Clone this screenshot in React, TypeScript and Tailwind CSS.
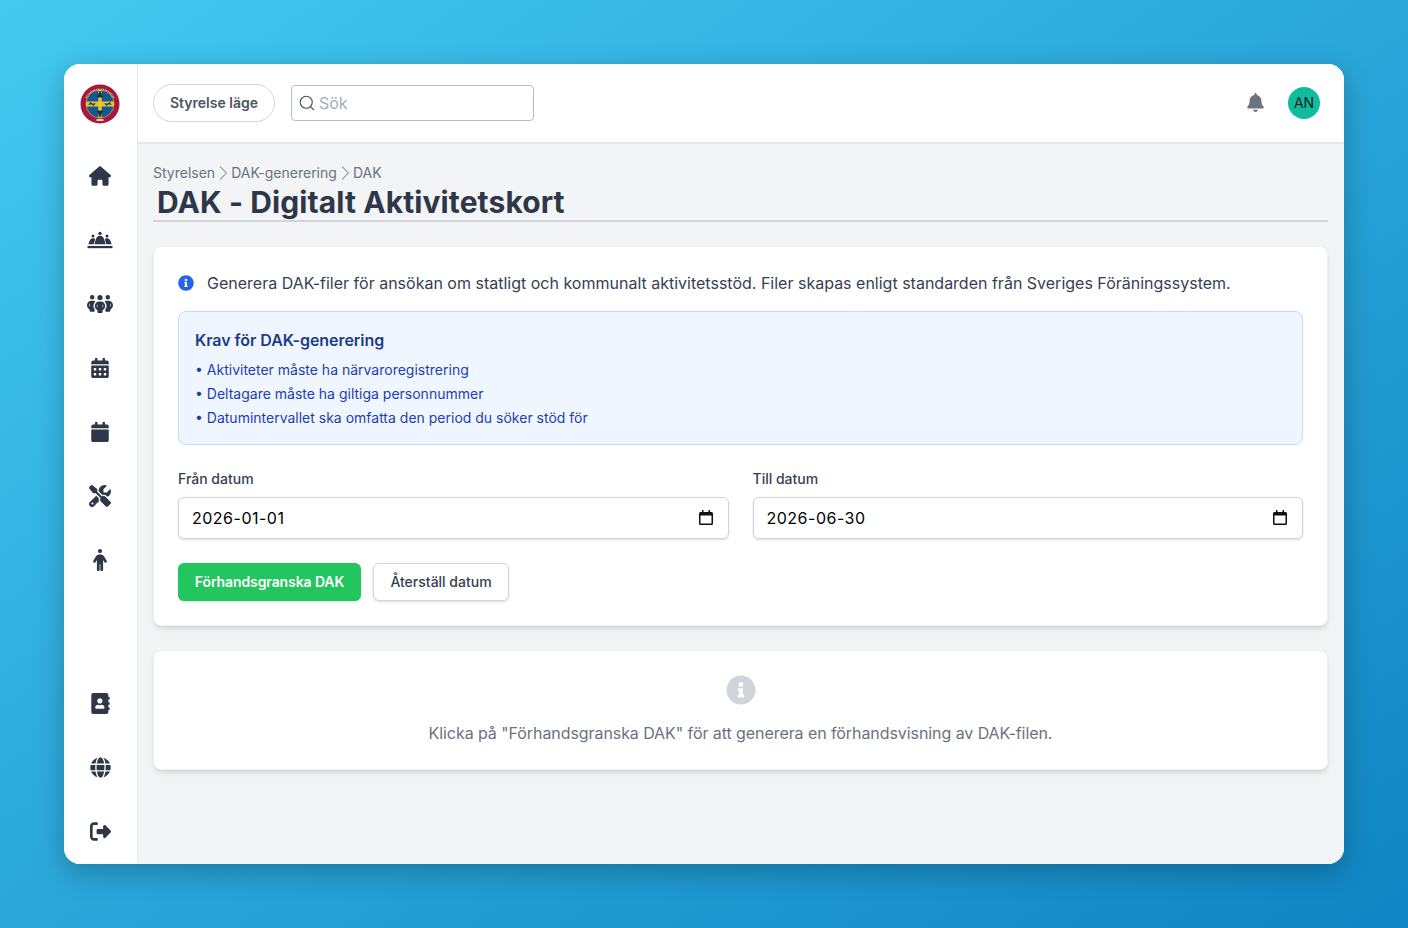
import React from "react";
import { FaCalendarAlt, FaCalendar, FaAddressBook, FaGlobe, FaInfoCircle } from "react-icons/fa";
import { FaHouse, FaPeopleGroup, FaScrewdriverWrench, FaPerson, FaRightFromBracket, FaBell } from "react-icons/fa6";
import { LuSearch } from "react-icons/lu";

function Logo() {
  return (
    <svg width="40" height="40" viewBox="0 0 40 40" aria-hidden="true">
      <circle cx="20" cy="20" r="19.5" fill="#a8173f" />
      <circle cx="20" cy="20" r="14" fill="#14588f" stroke="#d9b93c" strokeWidth="0.7" />
      <rect x="18.3" y="6" width="3.4" height="28" fill="#e7c52e" />
      <rect x="6" y="17.500" width="28" height="5" fill="#e7c52e" />
      <path d="M20 7l2.400 6h-4.800zM20 33l2.400-6h-4.800zM9 21c1-3 2-3 3-1s2 2 3-1M25 19c1 3 2 3 3 1s2-2 3 1" fill="#1a2b4a" stroke="#1a2b4a" strokeWidth="0.8" />
      <path d="M6 14A15.500 15.500 0 0 1 34 14" fill="none" stroke="#e9d9a0" strokeWidth="1.3" strokeDasharray="1 0.7" />
      <rect x="16.500" y="35" width="7" height="2" fill="#ecd9a4" />
    </svg>
  );
}

function Meeting() {
  return (
    <svg width="26" height="20" viewBox="0 0 26 20" fill="currentColor" aria-hidden="true" className="mt-[2px]">
      <circle cx="13" cy="2.400" r="1.700" />
      <circle cx="6" cy="5" r="1.500" />
      <circle cx="20" cy="5" r="1.500" />
      <path d="M13 4.800c2.600 0 3.800 2.100 4.400 4.400l1.200 4H7.400l1.200-4C9.200 6.900 10.400 4.800 13 4.800z" />
      <path d="M6 7.200c1 0 1.700.5 2.200 1.200L6.600 13.200H1.300l1.200-3.200C3 8.400 4.400 7.200 6 7.200zM20 7.200c1.600 0 3 1.200 3.500 2.800l1.200 3.200h-5.300l-1.600-4.800c.5-.7 1.200-1.200 2.200-1.200z" />
      <rect x="0.500" y="15" width="25" height="2.200" />
    </svg>
  );
}

function CalendarGlyph() {
  return (
    <svg width="14" height="15" viewBox="0 0 14 15" aria-hidden="true" className="shrink-0 -mt-[2px]">
      <path d="M3 0h1.500v2h5V0H11v2h1.500A1.500 1.500 0 0 1 14 3.500v10a1.500 1.500 0 0 1-1.500 1.500h-11A1.500 1.500 0 0 1 0 13.500v-10A1.500 1.500 0 0 1 1.500 2H3zM1.500 5.500v8h11v-8z" fill="#111" fillRule="evenodd" />
    </svg>
  );
}

function Chevron() {
  return (
    <svg width="16" height="20" viewBox="0 0 16 20" fill="none" stroke="#9ca3af" strokeWidth="1.100" aria-hidden="true" className="shrink-0">
      <path d="M5 3.500l6.500 6.500L5 16.500" />
    </svg>
  );
}

function DateField({ label, value }: { label: string; value: string }) {
  return (
    <div className="flex flex-col">
      <label className="text-sm leading-5 font-medium text-[#374151] mb-2">{label}</label>
      <div className="h-[42px] flex items-center justify-between pl-[13px] pr-[15px] bg-white border border-[#d1d5db] rounded-md shadow-sm">
        <span className="text-base text-black tracking-[0.5px]">{value}</span>
        <CalendarGlyph />
      </div>
    </div>
  );
}

const topNav = [
  <FaHouse size={22} />,
  <Meeting />,
  <FaPeopleGroup size={26} />,
  <FaCalendarAlt size={20} />,
  <FaCalendar size={20} />,
  <FaScrewdriverWrench size={22} />,
  <FaPerson size={22} />,
];
const bottomNav = [<FaAddressBook size={21} />, <FaGlobe size={21} />, <FaRightFromBracket size={21} />];

export default function App() {
  return (
    <div
      className="w-full h-[928px] p-16 bg-gradient-to-br from-[#43c9f0] to-[#0f85c3] overflow-hidden"
      style={{ fontFamily: "Inter, 'Liberation Sans', sans-serif" }}
    >
      <div className="w-[1280px] h-[800px] flex rounded-2xl overflow-hidden bg-white shadow-[0_8px_28px_rgba(0,0,0,0.25)]">
        <aside className="w-[74px] shrink-0 flex flex-col items-center bg-white border-r border-[#e5e7eb] text-[#2d3748] pr-[1px]">
          <div className="mt-5 h-10 flex items-center justify-center"><Logo /></div>
          <nav className="mt-[20px] flex flex-col items-center w-full">
            {topNav.map((icon, i) => (
              <div key={i} className="h-16 w-full flex items-center justify-center">{icon}</div>
            ))}
          </nav>
          <nav className="mt-auto mb-[1px] flex flex-col items-center w-full">
            {bottomNav.map((icon, i) => (
              <div key={i} className="h-16 w-full flex items-center justify-center">{icon}</div>
            ))}
          </nav>
        </aside>
        <div className="flex-1 min-w-0 flex flex-col bg-[#f3f4f6]">
          <header className="h-[80px] shrink-0 flex items-center justify-between pl-[15px] pr-6 pb-[1px] bg-white border-b-2 border-[#e5e7eb]">
            <div className="flex items-center gap-4">
              <div className="h-[38px] w-[122px] flex items-center justify-center rounded-full border border-[#d1d5db] text-sm font-semibold text-[#4b5563]">Styrelse läge</div>
              <div className="h-9 w-[243px] flex items-center gap-[3px] pl-[6px] rounded border border-[#b8bcc6]">
                <LuSearch size={18} strokeWidth={1.5} className="text-[#4b5563]" />
                <span className="text-base text-[#a0aec0]">Sök</span>
              </div>
            </div>
            <div className="flex items-center gap-[23px]">
              <FaBell size={19} className="text-[#6b7280]" />
              <div className="w-8 h-8 rounded-full bg-[#0fbc9c] flex items-center justify-center text-sm text-[#111827]">AN</div>
            </div>
          </header>
          <main className="flex-1 pl-[15px] pr-4 pt-[19px]">
            <div className="flex items-center text-sm leading-5 text-[#6b7280]">
              <span>Styrelsen</span>
              <Chevron />
              <span>DAK-generering</span>
              <Chevron />
              <span>DAK</span>
            </div>
            <h1 className="pl-1 h-[39px] text-3xl leading-[38px] font-bold tracking-[0.1px] text-[#2d3748] border-b-2 border-[#d1d5db]">DAK - Digitalt Aktivitetskort</h1>
            <section className="mt-[24px] bg-white rounded-lg shadow-md border border-[#eef0f3] px-6 pt-6 pb-6">
              <div className="flex items-center gap-[13px] h-6">
                <FaInfoCircle size={16} className="text-[#2563eb] shrink-0" />
                <p className="text-base leading-6 text-[#374151]">Generera DAK-filer för ansökan om statligt och kommunalt aktivitetsstöd. Filer skapas enligt standarden från Sveriges Föräningssystem.</p>
              </div>
              <div className="mt-4 h-[134px] bg-[#eff6ff] border border-[#bfdbfe] rounded-lg px-4 pt-[16px]">
                <h2 className="text-base leading-6 font-semibold tracking-[-0.05px] text-[#1e3a8a] mb-[6px]">Krav för DAK-generering</h2>
                <ul className="text-sm leading-6 text-[#1e40af]">
                  <li>• Aktiviteter måste ha närvaroregistrering</li>
                  <li>• Deltagare måste ha giltiga personnummer</li>
                  <li>• Datumintervallet ska omfatta den period du söker stöd för</li>
                </ul>
              </div>
              <div className="mt-6 grid grid-cols-2 gap-6">
                <DateField label="Från datum" value="2026-01-01" />
                <DateField label="Till datum" value="2026-06-30" />
              </div>
              <div className="mt-6 flex items-center gap-3">
                <button className="h-[38px] w-[183px] rounded-md bg-[#22c55e] text-white text-sm font-semibold tracking-[-0.1px] shadow-sm">Förhandsgranska DAK</button>
                <button className="h-[38px] w-[136px] rounded-md bg-white border border-[#d1d5db] text-[#374151] text-sm font-medium shadow-sm">Återställ datum</button>
              </div>
            </section>
            <section className="mt-6 h-[120px] bg-white rounded-lg shadow-md border border-[#eef0f3] flex flex-col items-center pt-[24px]">
              <FaInfoCircle size={30} className="text-[#d1d5db]" />
              <p className="mt-[16px] text-base leading-6 tracking-[-0.075px] text-[#6b7280]">Klicka på "Förhandsgranska DAK" för att generera en förhandsvisning av DAK-filen.</p>
            </section>
          </main>
        </div>
      </div>
    </div>
  );
}
